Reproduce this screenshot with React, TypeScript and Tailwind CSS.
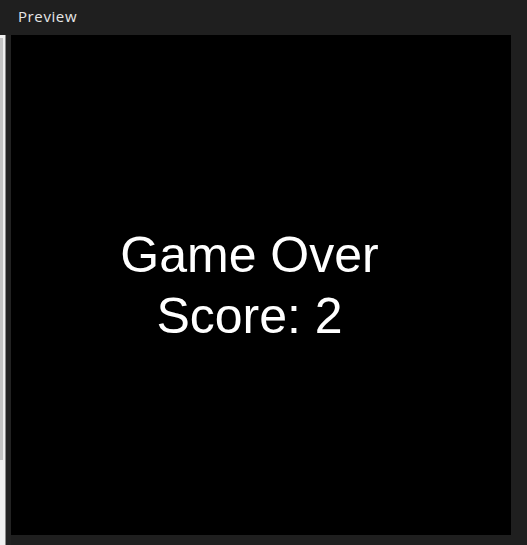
import React from "react";

export default function App() {
  return (
    <div className="w-[527px] h-[545px] bg-[#1f1f1f] flex flex-col overflow-hidden">
      <div className="h-[35px] shrink-0 flex items-center pl-[18px] pb-[2px]">
        <span className="text-[15px] tracking-[0.6px] text-[#e6e6e6] font-['Open_Sans','Noto_Sans',sans-serif]">
          Preview
        </span>
      </div>
      <div className="flex flex-row flex-1">
        <div className="w-[5px] bg-[#f0f0f0] flex flex-col pt-[3px]">
          <div className="w-[3px] h-[422px] bg-[#c4c4c4]" />
        </div>
        <div className="w-[1px] bg-[#8a8a8a]" />
        <div className="w-[5px] bg-[#222222]" />
        <div className="w-[500px] h-[500px] bg-black flex flex-col items-center pr-[23px] pt-[190px] text-white text-[50px] leading-[61px] font-['Liberation_Sans',Arial,sans-serif]">
          <div>Game Over</div>
          <div>Score: 2</div>
        </div>
      </div>
    </div>
  );
}
